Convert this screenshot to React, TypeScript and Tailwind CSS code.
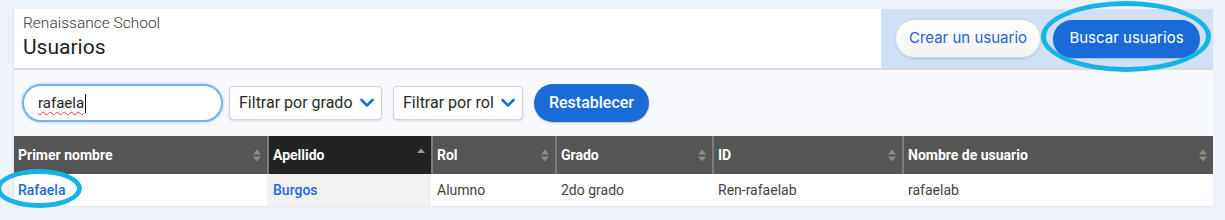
import React from "react";

const columns = [
  { label: "Primer nombre", width: "w-[253px]" },
  { label: "Apellido", width: "w-[164px]", active: true },
  { label: "Rol", width: "w-[124px]" },
  { label: "Grado", width: "w-[157px]" },
  { label: "ID", width: "w-[190px]" },
  { label: "Nombre de usuario", width: "flex-1" },
];

const row = [
  { text: "Rafaela", link: true },
  { text: "Burgos", link: true, active: true },
  { text: "Alumno" },
  { text: "2do grado" },
  { text: "Ren-rafaelab" },
  { text: "rafaelab" },
];

function SortIcon({ active }: { active?: boolean }) {
  if (active) {
    return (
      <svg width="8" height="14" viewBox="0 0 8 14" className="shrink-0">
        <path d="M0 5 L4 0.5 L8 5 Z" fill="#9a9a9a" />
      </svg>
    );
  }
  return (
    <svg width="8" height="13" viewBox="0 0 8 13" className="shrink-0">
      <path d="M0 5.5 L4 0.5 L8 5.5 Z" fill="#8e8e8e" />
      <path d="M0 7.5 L4 12.5 L8 7.5 Z" fill="#8e8e8e" />
    </svg>
  );
}

function Chevron() {
  return (
    <svg width="14" height="10" viewBox="0 0 14 10" className="shrink-0">
      <path d="M1.5 2 L7 7.5 L12.5 2" fill="none" stroke="#1a6fd6" strokeWidth="2.6" strokeLinecap="round" strokeLinejoin="round" />
    </svg>
  );
}

function Select({ label, width }: { label: string; width: string }) {
  return (
    <div className={`flex h-[34px] ${width} items-center justify-between rounded-[4px] border border-[#cfd4de] bg-white pl-[9px] pr-[7px] text-[16px] text-[#2b2b2b] shadow-[0_1px_2px_rgba(0,0,0,0.12)]`}>
      <span>{label}</span>
      <Chevron />
    </div>
  );
}

export default function App() {
  return (
    <div className="relative h-[220px] w-[1225px] overflow-hidden bg-[#eef2fb] pl-[13px] pt-[9px] font-['Roboto',sans-serif]">
      <div className="w-[1200px] border-l border-[#dfe3ea] bg-[#f7f9fd]">
        {/* header */}
        <div className="flex h-[61px] border-b-2 border-[#d6d9de]">
          <div className="flex flex-1 flex-col bg-white pl-[9px] pt-[4px]">
            <span className="text-[15.5px] font-light leading-[20px] text-[#3a3a3a]">Renaissance School</span>
            <span className="text-[21px] leading-[28px] text-[#1e1e1e]">Usuarios</span>
          </div>
          <div className="flex w-[332px] items-center gap-[12px] bg-[#d0e1f6] pl-[14px] font-['Inter',sans-serif]">
            <button className="h-[39px] w-[146px] rounded-full border border-[#d2d6dd] bg-gradient-to-b from-white to-[#f3f3f3] text-[15px] text-[#2b5fd6] shadow-[0_1px_2px_rgba(0,0,0,0.15)]">
              Crear un usuario
            </button>
            <button className="h-[38px] w-[147px] rounded-full bg-[#1a6bd8] text-[15px] text-white shadow-[0_1px_2px_rgba(0,0,0,0.2)]">
              Buscar usuarios
            </button>
          </div>
        </div>

        {/* filters */}
        <div className="flex h-[66px] items-center pl-[8px]">
          <div className="flex h-[38px] w-[201px] items-center rounded-full border-2 border-[#74b3ec] bg-white pl-[14px] text-[15px] text-[#222] shadow-[0_0_3px_rgba(80,160,235,0.6)]">
            <span className="underline decoration-[#e53935] decoration-wavy decoration-1 underline-offset-[3px]">rafaela</span>
            <span className="ml-[1px] h-[19px] w-px bg-[#111]" />
          </div>
          <div className="ml-[6px] flex items-center gap-[11px]">
            <Select label="Filtrar por grado" width="w-[153px]" />
            <Select label="Filtrar por rol" width="w-[130px]" />
            <button className="h-[38px] w-[115px] rounded-full bg-[#1a6bd8] text-[16px] font-medium text-white shadow-[0_1px_2px_rgba(0,0,0,0.2)]">
              Restablecer
            </button>
          </div>
        </div>

        {/* table */}
        <div className="flex h-[38px] bg-[#555555] text-[14px] font-bold text-white">
          {columns.map((c, i) => (
            <div
              key={c.label}
              className={`flex ${c.width} items-center justify-between pl-[4px] pr-[6px] ${i > 0 ? "border-l-2 border-[#7c7c7c]" : ""} ${c.active ? "bg-[#222222]" : ""}`}
            >
              <span>{c.label}</span>
              <SortIcon active={c.active} />
            </div>
          ))}
        </div>
        <div className="flex h-[33px] border-b border-[#e6e8ec] bg-white text-[14px] text-[#444]">
          {row.map((cell, i) => (
            <div
              key={cell.text}
              className={`flex ${columns[i].width} items-center pl-[4px] ${i > 0 ? "pl-[6px]" : ""} ${cell.active ? "bg-[#f1f1f1]" : ""} ${cell.link ? "font-medium text-[#1a6bd8]" : ""}`}
            >
              {cell.text}
            </div>
          ))}
        </div>
      </div>

      {/* annotation rings */}
      <div className="pointer-events-none absolute left-[1041px] top-[1px] h-[71px] w-[170px] rounded-[50%] border-[5px] border-[#16b3e6]" />
      <div className="pointer-events-none absolute left-[-4px] top-[169px] h-[39px] w-[86px] rounded-[50%] border-[5px] border-[#16b3e6]" />
    </div>
  );
}
